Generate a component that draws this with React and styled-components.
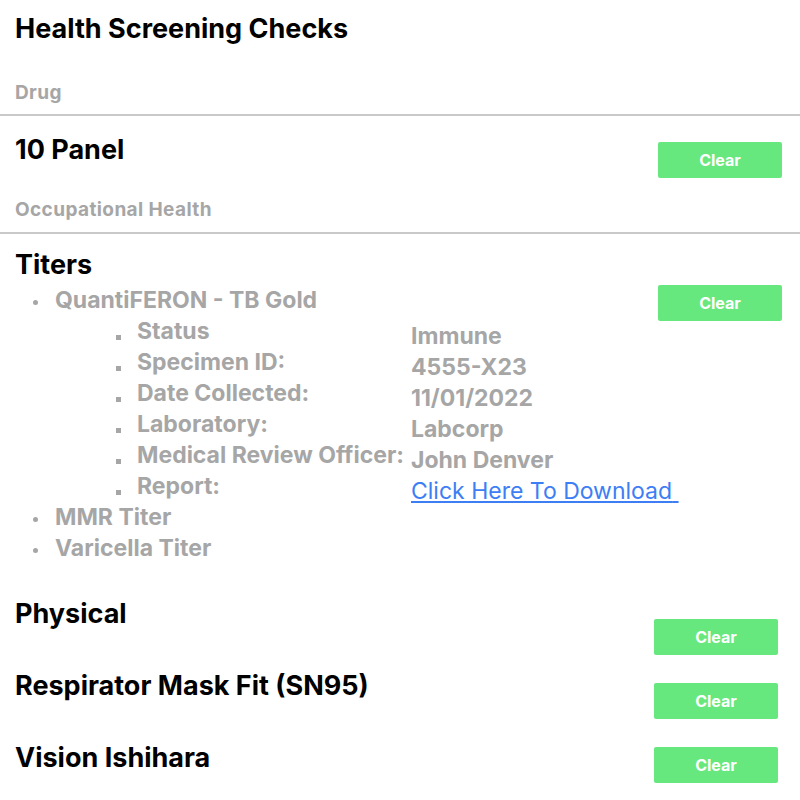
import React from "react";
import styled, { createGlobalStyle } from "styled-components";

const GlobalStyle = createGlobalStyle`
  html, body { margin: 0; padding: 0; background: #ffffff; }
  body { font-family: Inter, "Liberation Sans", sans-serif; }
`;

const Page = styled.div`
  padding: 11px 18px 0 15px;
  width: 800px;
  box-sizing: border-box;
`;

const Title = styled.h1`
  margin: 0;
  padding-top: 2px;
  font-size: 27px;
  line-height: 32px;
  font-weight: 700;
  color: #000;
`;

const Category = styled.div`
  margin-top: ${(p) => p.$top}px;
  font-size: 19px;
  line-height: 22px;
  letter-spacing: 0.4px;
  font-weight: 700;
  color: #a6a6a6;
`;

const Divider = styled.hr`
  border: 0;
  height: 2px;
  background: #c9c9c9;
  margin: ${(p) => p.$top}px -18px 0 -15px;
`;

const HeadingRow = styled.div`
  display: flex;
  justify-content: space-between;
  align-items: flex-start;
  margin-top: ${(p) => p.$top}px;
`;

const Heading = styled.h2`
  margin: ${(p) => p.$top || 0}px 0 0;
  padding-top: 2px;
  font-size: 27px;
  line-height: 32px;
  font-weight: 700;
  color: #000;
  white-space: nowrap;
`;

const ClearButton = styled.button`
  width: 124px;
  height: 36px;
  margin-top: ${(p) => p.$top || 0}px;
  flex: none;
  border: 0;
  border-radius: 2px;
  background: #66e87e;
  color: #fff;
  font-family: Inter, "Liberation Sans", sans-serif;
  font-size: 16px;
  font-weight: 700;
  cursor: pointer;
`;

const TestList = styled.ul`
  margin: 4px 0 0;
  padding: 0;
  list-style: none;
`;

const TestItem = styled.li`
  display: flex;
  justify-content: space-between;
  align-items: flex-start;
`;

const TestBody = styled.div`
  display: flex;
  flex-direction: column;
  flex: 1;
  min-width: 0;
`;

const ItemLine = styled.div`
  display: flex;
  align-items: flex-start;
`;

const Disc = styled.span`
  width: 5px;
  height: 5px;
  border-radius: 50%;
  background: #a6a6a6;
  margin: 15px 17px 0 18px;
  flex: none;
`;

const ItemText = styled.span`
  font-size: 23px;
  line-height: 31px;
  font-weight: 700;
  color: #a6a6a6;
  white-space: nowrap;
`;

const DetailGrid = styled.div`
  display: grid;
  grid-template-columns: 295px 1fr;
  margin-left: 101px;
`;

const DetailLabel = styled.div`
  display: flex;
  align-items: flex-start;
  gap: 16px;
`;

const Square = styled.span`
  width: 5px;
  height: 5px;
  background: #a6a6a6;
  margin-top: 19px;
  flex: none;
`;

const DetailValue = styled.div`
  padding-top: 10px;
  font-size: 23px;
  line-height: 21px;
  font-weight: 700;
  color: #a6a6a6;
  white-space: nowrap;
`;

const DownloadLink = styled.a`
  color: #3d7ef5;
  font-weight: 400;
  text-decoration: underline;
`;

const BottomSection = styled.div`
  display: flex;
  justify-content: space-between;
  align-items: flex-start;
  margin-top: 32px;
`;

const HeadingColumn = styled.div`
  display: flex;
  flex-direction: column;
  gap: 38px;
`;

const ButtonColumn = styled.div`
  display: flex;
  flex-direction: column;
  gap: 28px;
  margin: 23px 4px 0 0;
`;

const details = [
  ["Status", "Immune"],
  ["Specimen ID:", "4555-X23"],
  ["Date Collected:", "11/01/2022"],
  ["Laboratory:", "Labcorp"],
  ["Medical Review Officer:", "John Denver"],
];

export default function App() {
  return (
    <>
      <GlobalStyle />
      <Page>
        <Title>Health Screening Checks</Title>

        <Category $top={37}>Drug</Category>
        <Divider $top={10} />
        <HeadingRow $top={16}>
          <Heading>10 Panel</Heading>
          <ClearButton $top={10}>Clear</ClearButton>
        </HeadingRow>

        <Category $top={21}>Occupational Health</Category>
        <Divider $top={11} />
        <Heading $top={13}>Titers</Heading>

        <TestList>
          <TestItem>
            <TestBody>
              <ItemLine>
                <Disc />
                <ItemText>QuantiFERON - TB Gold</ItemText>
              </ItemLine>
              <DetailGrid>
                {details.map(([label, value]) => (
                  <React.Fragment key={label}>
                    <DetailLabel>
                      <Square />
                      <ItemText>{label}</ItemText>
                    </DetailLabel>
                    <DetailValue>{value}</DetailValue>
                  </React.Fragment>
                ))}
                <DetailLabel>
                  <Square />
                  <ItemText>Report:</ItemText>
                </DetailLabel>
                <DetailValue>
                  <DownloadLink href="#">Click Here To Download{"\u00a0"}</DownloadLink>
                </DetailValue>
              </DetailGrid>
            </TestBody>
            <ClearButton $top={0}>Clear</ClearButton>
          </TestItem>
          <TestItem>
            <ItemLine>
              <Disc />
              <ItemText>MMR Titer</ItemText>
            </ItemLine>
          </TestItem>
          <TestItem>
            <ItemLine>
              <Disc />
              <ItemText>Varicella Titer</ItemText>
            </ItemLine>
          </TestItem>
        </TestList>

        <BottomSection>
          <HeadingColumn>
            <Heading>Physical</Heading>
            <Heading>Respirator Mask Fit (SN95)</Heading>
            <Heading>Vision Ishihara</Heading>
          </HeadingColumn>
          <ButtonColumn>
            <ClearButton>Clear</ClearButton>
            <ClearButton>Clear</ClearButton>
            <ClearButton>Clear</ClearButton>
          </ButtonColumn>
        </BottomSection>
      </Page>
    </>
  );
}
